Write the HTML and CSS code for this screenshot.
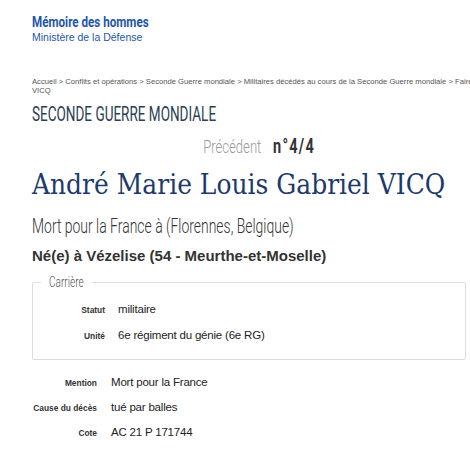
FILE: index.html
```html
<!DOCTYPE html>
<html lang="fr">
<head>
<meta charset="utf-8">
<title>Mémoire des hommes</title>
<link rel="stylesheet" href="styles.css">
</head>
<body>
<div class="page">
  <header class="brand">
    <div class="brand-title"><span class="narrow">Mémoire des hommes</span></div>
    <div class="brand-sub">Ministère de la Défense</div>
  </header>
  <nav class="crumbs">
    <div class="crumb-line">Accueil &gt; Conflits et opérations &gt; Seconde Guerre mondiale &gt; Militaires décédés au cours de la Seconde Guerre mondiale &gt; Faire une recherche</div>
    <div>VICQ</div>
  </nav>
  <h2 class="section"><span class="narrow">SECONDE GUERRE MONDIALE</span></h2>
  <div class="pager"><span class="pager-in"><span class="prev">Précédent</span><span class="num">n°4/4</span></span></div>
  <h1 class="name"><span class="name-in">André Marie Louis Gabriel VICQ</span></h1>
  <div class="death"><span class="narrow">Mort pour la France à (Florennes, Belgique)</span></div>
  <div class="birth">Né(e) à Vézelise (54 - Meurthe-et-Moselle)</div>
  <fieldset class="career">
    <legend><span class="legend-in">Carrière</span></legend>
    <dl class="rows rows-in">
      <dt>Statut</dt><dd>militaire</dd>
      <dt>Unité</dt><dd>6e régiment du génie (6e RG)</dd>
    </dl>
  </fieldset>
  <dl class="rows rows-out">
    <dt>Mention</dt><dd>Mort pour la France</dd>
    <dt>Cause du décès</dt><dd>tué par balles</dd>
    <dt>Cote</dt><dd>AC 21 P 171744</dd>
  </dl>
</div>
</body>
</html>
```
FILE: styles.css
```css
html, body { margin: 0; padding: 0; background: #fff; overflow: hidden; }
body { font-family: "Liberation Sans", Arial, sans-serif; color: #333; }
.page { padding: 14px 4px 0 32px; }
.narrow {
  display: inline-block; white-space: nowrap;
  transform: scaleX(0.74); transform-origin: left center;
}
.brand-title {
  font-family: Roboto, sans-serif;
  font-weight: bold; font-size: 15.5px; color: #2456a8; line-height: 17px;
}
.brand-title .narrow { transform: scaleX(0.75); }
.brand-sub { font-size: 10.5px; color: #2456a8; line-height: 13px; }
.crumbs { margin-top: 33px; font-size: 7.65px; line-height: 9px; color: #555; }
.crumb-line { white-space: nowrap; }
.section {
  margin: 7px 0 0; font-weight: normal;
  font-family: Roboto, sans-serif;
  font-size: 20.5px; line-height: 25px; color: #2c3e55;
}
.section .narrow { transform: scaleX(0.66); }
.pager {
  margin-top: 8px; display: flex; justify-content: center; padding-left: 20px;
  font-family: Roboto, sans-serif;
  font-size: 19px; line-height: 22px;
}
.pager-in { display: inline-block; white-space: nowrap; transform: scaleX(0.69); transform-origin: center; }
.prev { color: #9a9a9a; font-weight: 300; margin-right: 17px; }
.num { color: #333; font-weight: bold; font-size: 21px; letter-spacing: 1.8px; }
.name {
  margin: 10px 0 0; font-weight: normal;
  font-family: "DejaVu Serif", "Liberation Serif", serif;
  font-size: 27px; line-height: 34px; color: #1d3a6b; white-space: nowrap;
}
.name-in { display: inline-block; transform: scaleX(0.925); transform-origin: left center; }
.death {
  margin-top: 13px;
  font-family: Roboto, sans-serif; font-weight: 300;
  font-size: 19.5px; line-height: 24px; color: #333;
}
.death .narrow { transform: scaleX(0.715); }
.birth { margin-top: 8px; font-weight: bold; font-size: 15px; line-height: 18px; color: #333; }
.career {
  margin: 8px 0 0; padding: 10px 0 16px; border: 1px solid #ddd; border-radius: 2px;
}
.career legend {
  margin-left: 8px; padding: 0 7px 0 8px;
  font-family: Roboto, sans-serif; font-weight: 300;
  font-size: 15.5px; color: #555; width: 36px; white-space: nowrap;
}
.legend-in { display: inline-block; transform: scaleX(0.65); transform-origin: left center; }
.rows { display: grid; margin: 0; row-gap: 10px; align-items: baseline; }
.rows dt { text-align: right; font-weight: bold; font-size: 8.4px; color: #333; }
.rows dd { margin: 0; font-size: 11.5px; letter-spacing: -0.2px; line-height: 16px; color: #222; }
.rows-in { grid-template-columns: 72px 1fr; column-gap: 13px; }
.rows-out { margin-top: 14px; grid-template-columns: 65px 1fr; column-gap: 14px; row-gap: 9px; }
```
